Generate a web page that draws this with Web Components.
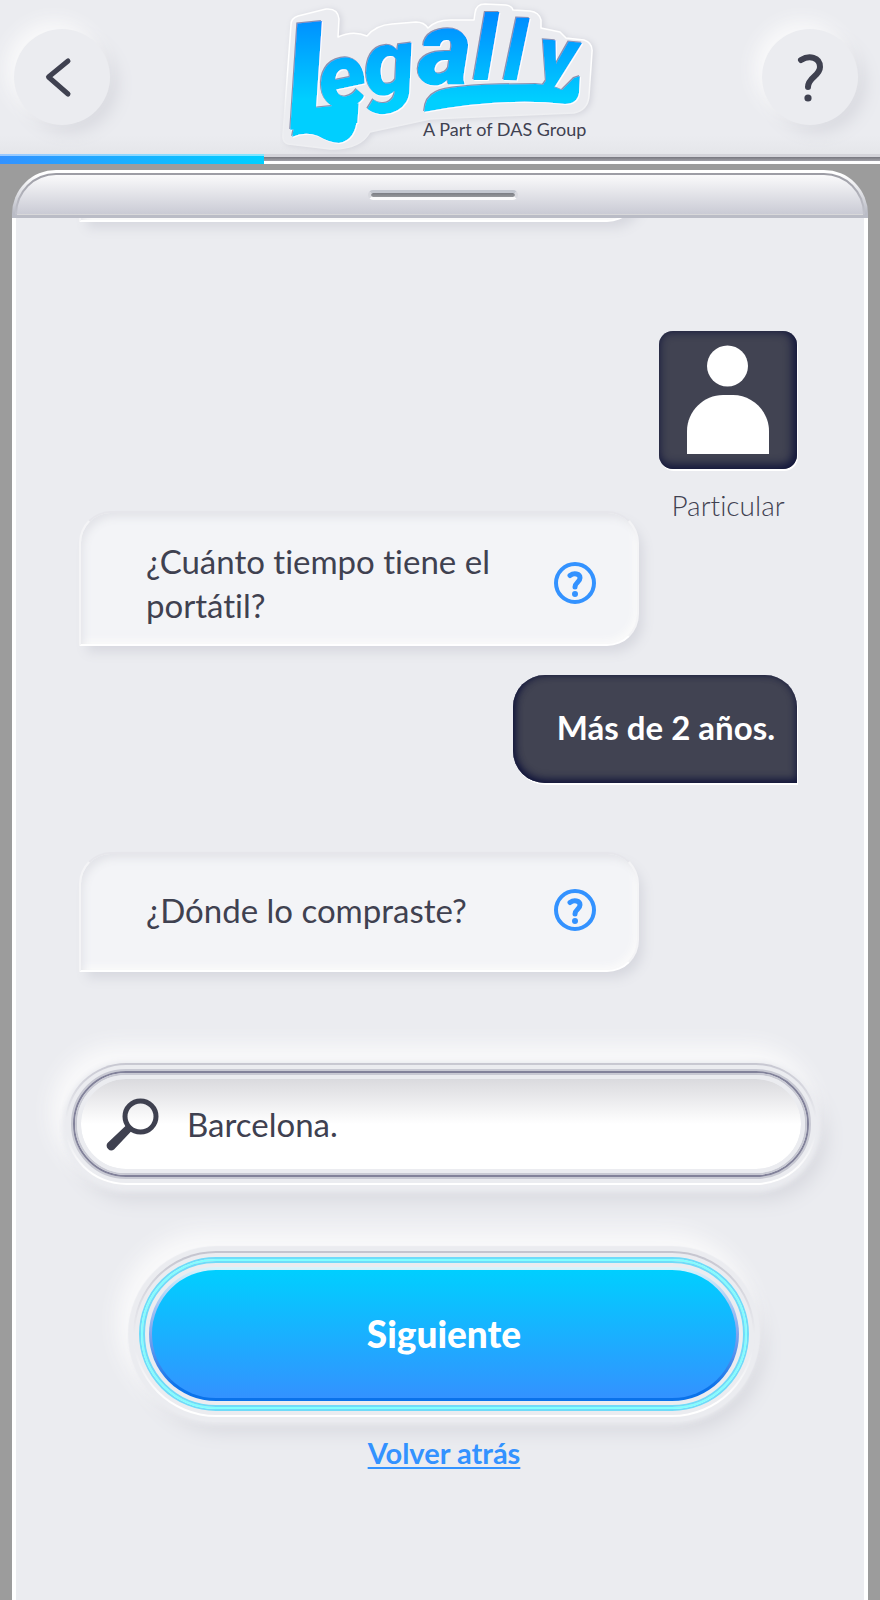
<!DOCTYPE html>
<html lang="es">
<head>
<meta charset="utf-8">
<meta name="viewport" content="width=device-width, initial-scale=1">
<title>Legally</title>
<style>
  html { --surface: #ebecf0; --ink: #3f4150; --blue: #3392ff; --cyan: #00cfff; --line: #c7c7d1; --glow: #f9f9fa; --shade: #d9dae0; }
  body { margin: 0; min-height: 100vh; background: #9c9c9c; color: var(--ink); font-family: Lato, "Liberation Sans", sans-serif; font-variant-ligatures: none; display: flex; flex-direction: column; }
  chat-panel { flex: 1; }
</style>
</head>
<body>
<app-header></app-header>
<progress-line value="30"></progress-line>
<chat-panel>
  <chat-question class="past" >&nbsp;</chat-question>
  <user-avatar>Particular</user-avatar>
  <chat-question help class="two">¿Cuánto tiempo tiene el portátil?</chat-question>
  <chat-answer>Más de 2 años.</chat-answer>
  <chat-question help>¿Dónde lo compraste?</chat-question>
  <search-field value="Barcelona." label="Lugar de compra"></search-field>
  <primary-button>Siguiente</primary-button>
  <back-link href="#atras">Volver atrás</back-link>
</chat-panel>

<script>
const define = (name, html, setup) => {
  const template = document.createElement('template');
  template.innerHTML = '<style>*{box-sizing:border-box}</style>' + html;
  customElements.define(name, class extends HTMLElement {
    constructor() {
      super();
      this.attachShadow({ mode: 'open' }).append(template.content.cloneNode(true));
    }
    connectedCallback() { if (setup) setup(this, this.shadowRoot); }
  });
};

define('round-button', `
  <style>
    :host { display: block; }
    button { display: grid; place-items: center; width: 96px; height: 96px; padding: 0; border: 0; border-radius: 50%;
      background: var(--surface); color: inherit; box-shadow: -8px -8px 18px var(--glow), 8px 8px 16px var(--shade); }
  </style>
  <button type="button"><slot></slot></button>`,
  (el, root) => root.querySelector('button').setAttribute('aria-label', el.getAttribute('label')));

define('brand-logo', `
  <style>
    :host { display: block; }
    svg { display: block; }
    .word { font-family: Roboto, Lato, sans-serif; font-weight: 900; font-style: italic; }
    .tag { font-family: Lato, sans-serif; font-size: 18px; }
  </style>
  <svg width="320" height="154" viewBox="280 0 320 154" role="img" aria-label="Legally, A Part of DAS Group">
    <defs>
      <linearGradient id="fill" gradientUnits="userSpaceOnUse" x1="0" y1="15" x2="0" y2="100">
        <stop offset="0" stop-color="#008cff"/><stop offset="1" stop-color="#00cfff"/>
      </linearGradient>
      <linearGradient id="edge" gradientUnits="userSpaceOnUse" x1="0" y1="70" x2="0" y2="115">
        <stop offset="0" stop-color="#fff"/><stop offset="1" stop-color="#eeeff2"/>
      </linearGradient>
      <filter id="rim" x="-10%" y="-10%" width="120%" height="120%">
        <feDropShadow dx="-1" dy="-1" stdDeviation="0.6" flood-color="#8d90ad"/>
        <feDropShadow dx="1" dy="1" stdDeviation="0.5" flood-color="#ffffff"/>
      </filter>
      <filter id="lift" x="-10%" y="-10%" width="120%" height="130%">
        <feDropShadow dx="2" dy="1" stdDeviation="3" flood-color="#d3d4dc"/>
      </filter>
    </defs>
    <path d="M291 25Q291 18 298 16L326 9Q338 8 339 19L338 37Q353 30 367 36Q376 25 392 24L416 22Q424 22 428 28Q436 20 450 20L474 20L475 13Q476 4 485 4L506 5Q512 6 513 10L530 11Q539 12 541 20L541 28L560 32L566 38L584 40Q593 43 592 52L589 96Q588 110 574 113L430 119L370 132Q360 150 330 149L288 144Q282 142 283 134Z" fill="#ebecf0" stroke="url(#edge)" stroke-width="1.5" stroke-linejoin="round" filter="url(#lift)"/>
    <g fill="url(#fill)" filter="url(#rim)">
      <text class="word" x="290 324 367 418 473 503 536" y="130 112 97 84 80 80 80" rotate="-6 -12 -7 0 0 2 5"><tspan font-size="148">L</tspan><tspan font-size="92">e</tspan><tspan font-size="92">g</tspan><tspan font-size="104">a</tspan><tspan font-size="90">l</tspan><tspan font-size="84">l</tspan><tspan font-size="78">y</tspan></text>
      <path d="M296 117Q312 118 328 122Q344 127 357 117Q356 140 339 143Q330 143 318 136Q305 131 292 137Z"/>
      <path d="M424 112Q425 97 436 92Q450 84 536 84Q552 85 562 90L574 78L580 76L579 93Q577 104 565 104Q505 97 424 112Z"/>
    </g>
    <text class="tag" x="423" y="136" fill="#3f4150">A Part of DAS Group</text>
  </svg>`);

define('app-header', `
  <style>
    :host { display: block; background: linear-gradient(var(--surface) 88%, #e5e6ea); }
    header { display: grid; grid-template-columns: 1fr auto 1fr; align-items: center; height: 154px; padding: 0 22px 0 14px; overflow: hidden; }
    round-button:last-child { justify-self: end; }
    brand-logo { margin: 0 0 0 8px; }
  </style>
  <header>
    <round-button label="Volver"><svg width="40" height="44" viewBox="0 0 40 44" fill="none" stroke="currentColor" stroke-width="5" stroke-linecap="round" stroke-linejoin="round"><path d="M26 6L6.500 22L26 39"/></svg></round-button>
    <brand-logo></brand-logo>
    <round-button label="Ayuda"><svg width="40" height="52" viewBox="0 0 40 52" fill="none" stroke="currentColor" stroke-width="6" stroke-linecap="round" stroke-linejoin="round"><path d="M11 9C19 4 30 6 30 16C30 25 18 26 18 36"/><circle cx="18" cy="47" r="3.600" fill="currentColor" stroke="none"/></svg></round-button>
  </header>`);

define('progress-line', `
  <style>
    :host { display: block; height: 10px; background: linear-gradient(#d4d4da 0 3px, #77777f 3px, #a2a2a9 7px, #fff 7px); }
    div { height: 10px; background: linear-gradient(#ffffff80 0 2px, transparent 2px), linear-gradient(90deg, var(--blue), var(--cyan)); }
  </style>
  <div role="progressbar" aria-valuemin="0" aria-valuemax="100"></div>`,
  (el, root) => {
    const bar = root.querySelector('div');
    bar.style.width = el.getAttribute('value') + '%';
    bar.setAttribute('aria-valuenow', el.getAttribute('value'));
  });

define('chat-panel', `
  <style>
    :host { display: flex; flex-direction: column; margin: 6px 12px 0; }
    .lid { height: 48px; padding: 3px 3px 0; border-radius: 44px 44px 0 0; background: linear-gradient(#fff 10%, #babcc6 90%); }
    .rim { height: 45px; padding: 2px 2px 3px; border-radius: 41px 41px 0 0; background: linear-gradient(#9c9ca4, #c2c3cc 41px, #babcc6 42px); }
    .face { display: grid; place-items: center; height: 40px; border-radius: 39px 39px 0 0; border-bottom: 1px solid #d8d8da; background: linear-gradient(#fafafb, #cacbd5); }
    .grip { width: 150px; height: 10px; margin: 0 0 0 6px; border-radius: 5px; border: 3px solid; border-color: #c3c7d0 #d8d9df #fafafb; background: linear-gradient(#7b7d84, #96989c) padding-box; }
    main { flex: 1; display: flex; flex-direction: column; padding: 0 67px 64px 63px; border: solid #fff; border-width: 0 4px; background: var(--surface); overflow: hidden; }
    ::slotted(*) { flex: none; }
    ::slotted(.past) { margin-top: -131px; }
    ::slotted(user-avatar) { margin-top: 109px; align-self: flex-end; }
    ::slotted(.two) { margin-top: -10px; }
    ::slotted(chat-answer) { margin: 29px 0 69px; align-self: flex-end; }
    ::slotted(search-field) { margin: 91px -20px 0 -14px; }
    ::slotted(primary-button) { margin: 66px 42px 0 54px; }
    ::slotted(back-link) { margin: 18px 42px 0 54px; }
  </style>
  <div class="lid"><div class="rim"><div class="face"><div class="grip"></div></div></div></div>
  <main><slot></slot></main>`);

define('chat-question', `
  <style>
    :host { display: block; width: 560px; max-width: 100%; }
    div { display: flex; align-items: center; justify-content: space-between; gap: 24px; min-height: 120px; padding: 8px 41px 12px 65px;
      border: 2px solid; border-color: #e6e6eb #f4f4f6 #fff #f4f4f6; border-radius: 32px 32px 32px 0;
      background: #f3f4f7; box-shadow: inset 4px 6px 8px -2px #e2e3e8, inset -3px -4px 6px #fafafa, 6px 8px 12px -2px #d7d8df; }
    :host(.two) div, :host(.past) div { min-height: 135px; padding-top: 14px; padding-bottom: 6px; }
    p { margin: 0; font-size: 33px; line-height: 44px; max-width: 370px; }
    button { flex: none; padding: 0; border: 0; background: none; color: var(--blue); }
    :host(:not([help])) button { display: none; }
    svg { display: block; }
  </style>
  <div><p><slot></slot></p>
    <button type="button" aria-label="Ayuda"><svg width="42" height="42" viewBox="0 0 42 42" fill="none" stroke="currentColor" stroke-width="4"><circle cx="21" cy="21" r="19"/><path d="M16 13.500C20 10.500 26 11.500 26 16C26 20 21 20.500 21 25" stroke-width="5" stroke-linecap="round" stroke-linejoin="round"/><circle cx="21" cy="32" r="3" fill="currentColor" stroke="none"/></svg></button>
  </div>`);

define('chat-answer', `
  <style>
    :host { display: block; }
    p { margin: 0; min-width: 284px; padding: 30px 22px 34px 44px; border-radius: 32px 32px 0 32px; background: #414352; color: #fff;
      font-size: 33px; line-height: 44px; font-weight: 700;
      box-shadow: inset 0 -3px 8px #10143a, inset 3px 0 8px -2px #10143a, 1px 2px 0 #fff; }
  </style>
  <p><slot></slot></p>`);

define('user-avatar', `
  <style>
    :host { display: flex; flex-direction: column; align-items: center; }
    div { width: 138px; height: 138px; border-radius: 14px; background: #414352; box-shadow: inset -2px -2px 10px 2px #10143a, 1px 2px 0 #fff; }
    svg { display: block; }
    p { margin: 20px 0 0; font-size: 28px; line-height: 32px; font-weight: 300; }
  </style>
  <div><svg width="138" height="138" viewBox="0 0 138 138" fill="#fff" aria-hidden="true"><circle cx="68.500" cy="35" r="20.500"/><path d="M28 123V100C28 80 45 64 64 64H74C93 64 110 80 110 100V123Z"/></svg></div>
  <p><slot></slot></p>`);

define('search-field', `
  <style>
    :host { display: block; }
    .base { border-radius: 61px; padding: 2px; background: linear-gradient(var(--line), var(--surface) 45% 60%, #fff 92%);
      box-shadow: 0 0 5px 2px var(--surface), 0 5px 5px 2px var(--surface), -8px -12px 20px 6px var(--glow), 8px 14px 18px 2px var(--shade); }
    .well { border-radius: 59px; padding: 4px; background: var(--surface); }
    .ring { border-radius: 55px; border: 2px solid #c8c9d3; }
    .ring2 { border-radius: 53px; border: 2px solid #82829a; }
    .ring3 { border-radius: 51px; border: 2px solid #c8c9d3; }
    label { display: flex; align-items: center; gap: 27px; height: 98px; padding: 4px 36px 2px 25px; border-radius: 49px; border: 4px solid var(--surface);
      background: linear-gradient(#dadade, #fff 50%) padding-box; }
    svg { flex: none; display: block; }
    input { flex: 1; min-width: 0; padding: 0 0 2px; border: 0; outline: 0; background: none; color: inherit; font: 33px/44px Lato, "Liberation Sans", sans-serif; }
  </style>
  <div class="base"><div class="well"><div class="ring"><div class="ring2"><div class="ring3">
    <label><svg width="54" height="54" viewBox="0 0 54 54" aria-hidden="true"><circle cx="34.500" cy="18.500" r="15.500" fill="none" stroke="#3f4150" stroke-width="5"/><path d="M20 27.500L25.500 33L8 51.500A4.700 4.700 0 0 1 1.500 45Z" fill="#3f4150"/></svg><input type="text"></label>
  </div></div></div></div></div>`,
  (el, root) => {
    const input = root.querySelector('input');
    input.value = el.getAttribute('value');
    input.setAttribute('aria-label', el.getAttribute('label'));
  });

define('primary-button', `
  <style>
    :host { display: block; }
    .base { border-radius: 83px; padding: 2px; background: linear-gradient(#c4c4ce, var(--surface) 50% 60%, #fff 92%);
      box-shadow: 0 0 1px 5px var(--surface), 0 5px 5px 2px var(--surface), -8px -12px 20px 8px var(--glow), 8px 14px 18px 2px var(--shade); }
    .well { border-radius: 81px; padding: 4px; background: var(--surface); }
    .ring { border-radius: 77px; border: 2px solid #6fdbf9; }
    .ring2 { border-radius: 75px; border: 2px solid #82ffff; }
    .ring3 { border-radius: 73px; border: 2px solid #6fdbf9; padding: 4px; }
    button { display: block; width: 100%; height: 134px; padding: 0; border: 3px solid transparent; border-radius: 67px; color: #fff;
      background: linear-gradient(var(--cyan), var(--blue)) padding-box, linear-gradient(#d8f5fc, #7fa4ee 50%, #0a72ea 90%) border-box;
      font: 900 37px/44px Lato, "Liberation Sans", sans-serif; }
  </style>
  <div class="base"><div class="well"><div class="ring"><div class="ring2"><div class="ring3"><button type="button"><slot></slot></button></div></div></div></div></div>`);

define('back-link', `
  <style>
    :host { display: block; text-align: center; }
    a { color: var(--blue); font-size: 29px; line-height: 36px; font-weight: 700; text-decoration-thickness: 2px; text-underline-offset: 3px; }
  </style>
  <a><slot></slot></a>`,
  (el, root) => { root.querySelector('a').href = el.getAttribute('href'); });
</script>
</body>
</html>
